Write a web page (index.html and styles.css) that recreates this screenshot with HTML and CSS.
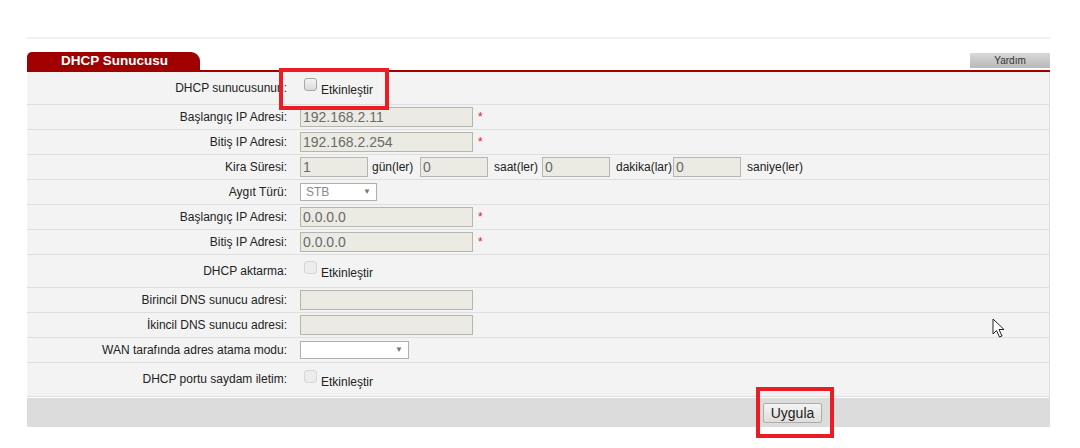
FILE: index.html
```html
<!DOCTYPE html>
<html lang="tr">

<head>
    <meta charset="UTF-8">
    <meta name="viewport" content="width=device-width, initial-scale=1.0">
    <title>DHCP Sunucusu</title>
    <link rel="stylesheet" href="styles.css">
</head>

<body>
    <div class="page">
        <div class="topline"></div>

        <div class="tabbar">
            <div class="tab">DHCP Sunucusu</div>
            <div class="help">Yardım</div>
        </div>
        <div class="redline"></div>

        <div class="panel">
            <table class="form">
                <tr class="row-first">
                    <td class="label">DHCP sunucusunun:</td>
                    <td class="field">
                        <span class="check"><input type="checkbox"><span>Etkinleştir</span></span>
                    </td>
                </tr>
                <tr>
                    <td class="label">Başlangıç IP Adresi:</td>
                    <td class="field"><input class="text wide" type="text" value="192.168.2.11" disabled><span class="req">*</span></td>
                </tr>
                <tr>
                    <td class="label">Bitiş IP Adresi:</td>
                    <td class="field"><input class="text wide" type="text" value="192.168.2.254" disabled><span class="req">*</span></td>
                </tr>
                <tr>
                    <td class="label">Kira Süresi:</td>
                    <td class="field">
                        <div class="lease">
                            <input class="text short" type="text" value="1" disabled><span class="unit">gün(ler)</span>
                            <input class="text short" type="text" value="0" disabled><span class="unit">saat(ler)</span>
                            <input class="text short" type="text" value="0" disabled><span class="unit">dakika(lar)</span>
                            <input class="text short" type="text" value="0" disabled><span class="unit">saniye(ler)</span>
                        </div>
                    </td>
                </tr>
                <tr>
                    <td class="label">Aygıt Türü:</td>
                    <td class="field"><span class="select select-sm disabled">STB<span class="arrow">▼</span></span></td>
                </tr>
                <tr>
                    <td class="label">Başlangıç IP Adresi:</td>
                    <td class="field"><input class="text wide" type="text" value="0.0.0.0" disabled><span class="req">*</span></td>
                </tr>
                <tr>
                    <td class="label">Bitiş IP Adresi:</td>
                    <td class="field"><input class="text wide" type="text" value="0.0.0.0" disabled><span class="req">*</span></td>
                </tr>
                <tr class="row-check">
                    <td class="label">DHCP aktarma:</td>
                    <td class="field">
                        <span class="check"><input type="checkbox" disabled><span>Etkinleştir</span></span>
                    </td>
                </tr>
                <tr>
                    <td class="label">Birincil DNS sunucu adresi:</td>
                    <td class="field"><input class="text wide" type="text" value="" disabled></td>
                </tr>
                <tr>
                    <td class="label">İkincil DNS sunucu adresi:</td>
                    <td class="field"><input class="text wide" type="text" value="" disabled></td>
                </tr>
                <tr>
                    <td class="label">WAN tarafında adres atama modu:</td>
                    <td class="field"><span class="select select-md"><span class="arrow">▼</span></span></td>
                </tr>
                <tr class="row-last">
                    <td class="label">DHCP portu saydam iletim:</td>
                    <td class="field">
                        <span class="check"><input type="checkbox" disabled><span>Etkinleştir</span></span>
                    </td>
                </tr>
            </table>

            <div class="actions">
                <button class="apply-btn">Uygula</button>
            </div>
        </div>
    </div>

    <!-- annotation boxes and mouse pointer over the screenshot -->
    <div class="mark mark-check"></div>
    <div class="mark mark-apply"></div>
    <svg class="cursor" width="14" height="21" viewBox="0 0 14 21">
        <path d="M1 1 L1 16 L4.5 12.5 L7.5 19 L10 18 L7 11.5 L12 11.5 Z" fill="#fff" stroke="#222" stroke-width="1" stroke-linejoin="round" />
    </svg>
</body>

</html>
```

FILE: styles.css
```css
* {
    margin: 0;
    padding: 0;
    box-sizing: border-box;
    font-family: 'Liberation Sans', Arial, sans-serif;
}

body {
    background-color: #ffffff;
    color: #333;
    position: relative;
    width: 1080px;
    height: 448px;
    overflow: hidden;
}

.page {
    width: 1023px;
    margin-left: 27px;
    padding-top: 37px;
}

.topline {
    height: 2px;
    background-color: #f0f0f0;
    margin-bottom: 13px;
}

.tabbar {
    display: flex;
    justify-content: space-between;
    align-items: flex-end;
    height: 18px;
}

.tab {
    width: 173px;
    height: 18px;
    background-color: #a00000;
    border-radius: 5px 9px 0 0;
    color: #ffffff;
    font-size: 13.5px;
    font-weight: bold;
    line-height: 18px;
    padding-left: 34px;
}

.help {
    width: 80px;
    height: 15px;
    margin-bottom: 2px;
    background: linear-gradient(#d9d9d9, #b8b8b8);
    color: #333;
    font-size: 10px;
    line-height: 15px;
    text-align: center;
}

.redline {
    height: 2px;
    background-color: #a00000;
}

.panel {
    background-color: #f3f3f3;
    border-right: 1px solid #dddddd;
}

.form {
    width: 100%;
    border-collapse: collapse;
}

.form tr {
    height: 25px;
}

.form tr.row-first {
    height: 32px;
}

.form tr.row-check {
    height: 33px;
}

.form tr.row-last {
    height: 34px;
}

.form td {
    border-bottom: 1px solid #dedede;
    font-size: 12px;
    color: #222;
    vertical-align: middle;
}

.label {
    width: 263px;
    text-align: right;
    padding-right: 3px;
}

.field {
    padding-left: 10px;
}

.text {
    height: 20px;
    border: 1px solid #b5b5b0;
    background-color: #ebebe4;
    color: #6a6a6a;
    font-size: 14px;
    padding: 0 2px;
    vertical-align: middle;
}

.wide {
    width: 173px;
}

.short {
    width: 68px;
}

.req {
    color: #e02020;
    font-size: 12px;
    margin-left: 5px;
    vertical-align: middle;
}

.lease {
    display: flex;
    align-items: center;
}

.unit {
    margin: 0 3px 0 4px;
    min-width: 45px;
}

.lease .unit:nth-of-type(2) {
    margin-left: 6px;
}

.lease .unit:nth-of-type(3) {
    margin-left: 6px;
    margin-right: 1px;
}

.lease .unit:nth-of-type(4) {
    margin-left: 6px;
}

.check {
    display: inline-flex;
    align-items: flex-end;
}

.check input {
    appearance: none;
    width: 13px;
    height: 13px;
    margin: 0 4px 6px 4px;
    border: 1px solid #a6a6a6;
    border-radius: 3px;
    background: linear-gradient(#f4f4f4, #dadada);
}

.check input:disabled {
    border-color: #d6d6d6;
    background: #ececec;
}

.check span {
    font-size: 12px;
    color: #222;
}

.select {
    display: inline-flex;
    align-items: center;
    justify-content: space-between;
    height: 18px;
    border: 1px solid #b0b0b0;
    background-color: #ffffff;
    font-size: 12px;
    padding: 0 5px;
    vertical-align: middle;
}

.select.disabled {
    color: #888;
}

.select-sm {
    width: 77px;
}

.select-md {
    width: 109px;
    justify-content: flex-end;
}

.arrow {
    font-size: 8px;
    color: #777;
}

.actions {
    height: 30px;
    background-color: #dcdcdc;
    padding: 5px 0 0 736px;
    border-top: 1px solid #ffffff;
}

.apply-btn {
    width: 59px;
    height: 20px;
    border: 1px solid #adadad;
    border-radius: 2px;
    background: linear-gradient(#f4f4f4, #dedede);
    color: #222;
    font-size: 14px;
    cursor: pointer;
}

.mark {
    position: absolute;
    border: 4px solid #ea1c24;
}

.mark-check {
    left: 279px;
    top: 68px;
    width: 110px;
    height: 42px;
}

.mark-apply {
    left: 756px;
    top: 387px;
    width: 78px;
    height: 51px;
}

.cursor {
    position: absolute;
    left: 992px;
    top: 318px;
}
```
